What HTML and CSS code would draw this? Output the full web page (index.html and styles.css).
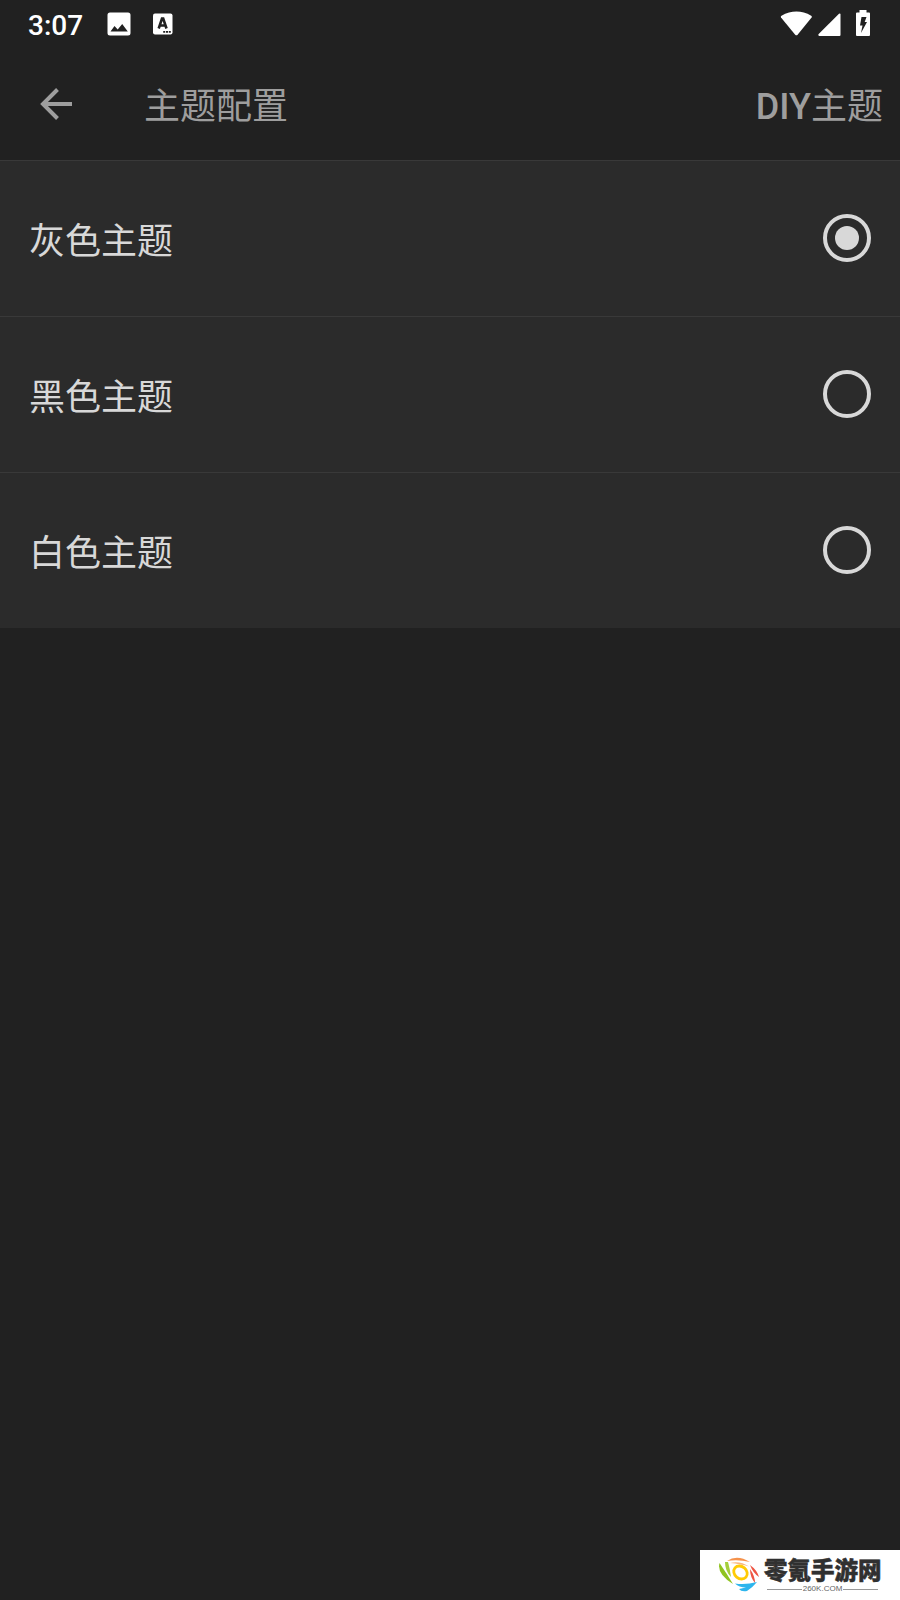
FILE: index.html
```
<!DOCTYPE html>
<html lang="zh">
<head>
    <meta charset="UTF-8">
    <meta name="viewport" content="width=device-width, initial-scale=1.0">
    <title>主题配置</title>
    <link rel="stylesheet" href="styles.css">
</head>
<body>
    <div class="status-bar">
        <span class="clock">3:07</span>
        <svg class="icon-image" width="24" height="24" viewBox="0 0 24 24">
            <path fill="#fff" fill-rule="evenodd" d="M3 .5h18q2.500 0 2.500 2.500v18q0 2.500-2.500 2.500H3Q.5 23.500.5 21V3Q.5.5 3 .5zM3.500 19.500h17.300L15.200 12l-4.500 5.400-3.200-3.300z"/>
        </svg>
        <svg class="icon-input" width="20" height="22" viewBox="0 0 20 22">
            <path fill="#fff" d="M2 .5h15.500q2 0 2 2v17q0 2-2 2H2q-2 0-2-2v-17q0-2 2-2z"/>
            <path fill="none" stroke="#212121" stroke-width="2.600" d="M5.700 15.500 9 5.500h1.200L13.500 15.500M7 12.500h5.200"/>
            <path fill="#212121" d="M10.200 18h2v1.700h-2zM13 18h2v1.700h-2zM15.800 18h2v1.700h-2z"/>
        </svg>
        <div class="signals">
            <svg width="32" height="26" viewBox="0 0 32 26">
                <path fill="#fff" d="M1 7.500Q.5 6.500 1.500 5.700Q16.500-2.500 31.200 5.700q1 .8.400 1.800L17.600 24.700q-1.200 1-2.400 0z"/>
            </svg>
            <svg class="icon-cell" width="23" height="23" viewBox="0 0 23 23">
                <path fill="#fff" d="M22.500 1.500V22q0 1-1 1H1.200Q-.3 22.500.7 21L21 .8q1.500-.8 1.500.7z"/>
            </svg>
            <svg class="icon-battery" width="14" height="26" viewBox="0 0 14 26">
                <path fill="#fff" d="M3.500 0h7v2.500H13q1 0 1 1V25q0 1-1 1H1q-1 0-1-1V3.500q0-1 1-1h2.500z"/>
                <path fill="#212121" d="M5.500 7h5L8.700 12H11L5 23l1.500-7.500H4z"/>
            </svg>
        </div>
    </div>
    <div class="toolbar">
        <svg class="back" width="32" height="32" viewBox="0 0 32 32">
            <path fill="none" stroke="#9e9e9e" stroke-width="4" d="M32 16H3M17.500 1.500 3 16l14.500 14.500"/>
        </svg>
        <span class="title">主题配置</span>
        <span class="action"><b>DIY</b>主题</span>
    </div>
    <div class="list">
        <div class="row">
            <span class="label">灰色主题</span>
            <div class="radio checked"></div>
        </div>
        <div class="row">
            <span class="label">黑色主题</span>
            <div class="radio"></div>
        </div>
        <div class="row">
            <span class="label">白色主题</span>
            <div class="radio"></div>
        </div>
    </div>
    <div class="watermark">
        <svg width="40" height="36" viewBox="0 0 40 36">
            <path fill="#f5924c" d="M8 4Q18-3 31 5Q19 2 8 4z"/>
            <path fill="#f9b77e" d="M11 6q10-2.500 19 3.500-8-2.500-19-3.500z"/>
            <path fill="#8fc31f" d="M.5 6q-3 11 13.500 21Q8 17 .5 6z"/>
            <path fill="#a5ce3b" d="M6 5q0 9 6 15Q11 12 9 5z"/>
            <path fill="#ee5544" d="M31 8q7 5 9 12-6-4-9-12zM31 12q5 7 5 14-5-6-5-14z"/>
            <path fill="#2db5ed" d="M16 26.500q11 1.500 22-1.500-4 5-10 9-6 1-8-2l7-1.500q-7 0-11-4z"/>
            <ellipse cx="21.500" cy="15.500" rx="7.200" ry="6" transform="rotate(40 21.500 15.500)" fill="none" stroke="#ffcb05" stroke-width="2.800"/>
        </svg>
        <div class="brand">
            <div class="brand-name">零氪手游网</div>
            <div class="brand-url">260K.COM</div>
        </div>
    </div>
</body>
</html>
```
FILE: styles.css
```
* {
    box-sizing: border-box;
}
body {
    margin: 0;
    height: 1600px;
    display: flex;
    flex-direction: column;
    background: #212121;
    font-family: Roboto, "Noto Sans CJK SC", sans-serif;
    overflow: hidden;
}
svg {
    display: block;
    flex: none;
}
.status-bar {
    display: flex;
    align-items: flex-start;
    height: 48px;
    padding: 10px 30px 0 28px;
}
.clock {
    width: 79px;
    color: #fff;
    font-size: 28px;
    font-weight: 500;
    line-height: 32px;
}
.icon-image {
    margin-top: 2px;
}
.icon-input {
    margin: 3px 0 0 22px;
}
.signals {
    display: flex;
    align-items: flex-end;
    margin-left: auto;
}
.icon-cell {
    margin-left: 6px;
}
.icon-battery {
    margin-left: 15px;
}
.toolbar {
    display: flex;
    align-items: center;
    height: 112px;
    padding: 0 17px 0 40px;
    color: #9e9e9e;
    font-size: 36px;
    line-height: 52px;
}
.title {
    margin-left: 72px;
    padding-top: 6px;
}
.action {
    margin-left: auto;
    padding-top: 6px;
}
.action b {
    font-weight: 500;
}
.row {
    display: flex;
    align-items: center;
    justify-content: space-between;
    height: 156px;
    padding: 0 29px 1px;
    background: #2b2b2b;
    border-top: 1px solid #393939;
    color: #d8d8d8;
    font-size: 36px;
    line-height: 52px;
}
.label {
    padding-top: 7px;
}
.radio {
    display: flex;
    align-items: center;
    justify-content: center;
    width: 48px;
    height: 48px;
    border: 4px solid #d8d8d8;
    border-radius: 50%;
}
.radio.checked::before {
    content: "";
    width: 24px;
    height: 24px;
    border-radius: 50%;
    background: #d8d8d8;
}
.watermark {
    display: flex;
    align-items: flex-start;
    width: 200px;
    height: 50px;
    margin: auto 0 0 auto;
    padding: 7px 0 0 19px;
    background: #fff;
}
.brand {
    width: 119px;
    margin-left: 5px;
}
.brand-name {
    color: #303030;
    font-family: "Noto Sans CJK SC", sans-serif;
    font-size: 23.5px;
    font-weight: 900;
    line-height: 25px;
    white-space: nowrap;
    -webkit-text-stroke: 0.5px #303030;
}
.brand-url {
    display: flex;
    align-items: center;
    gap: 1px;
    padding: 2px 5px 0 3px;
    color: #666;
    font-family: "Liberation Sans", sans-serif;
    font-size: 8px;
    line-height: 10px;
}
.brand-url::before,
.brand-url::after {
    content: "";
    flex: 1;
    height: 1px;
    background: #999;
}
```
